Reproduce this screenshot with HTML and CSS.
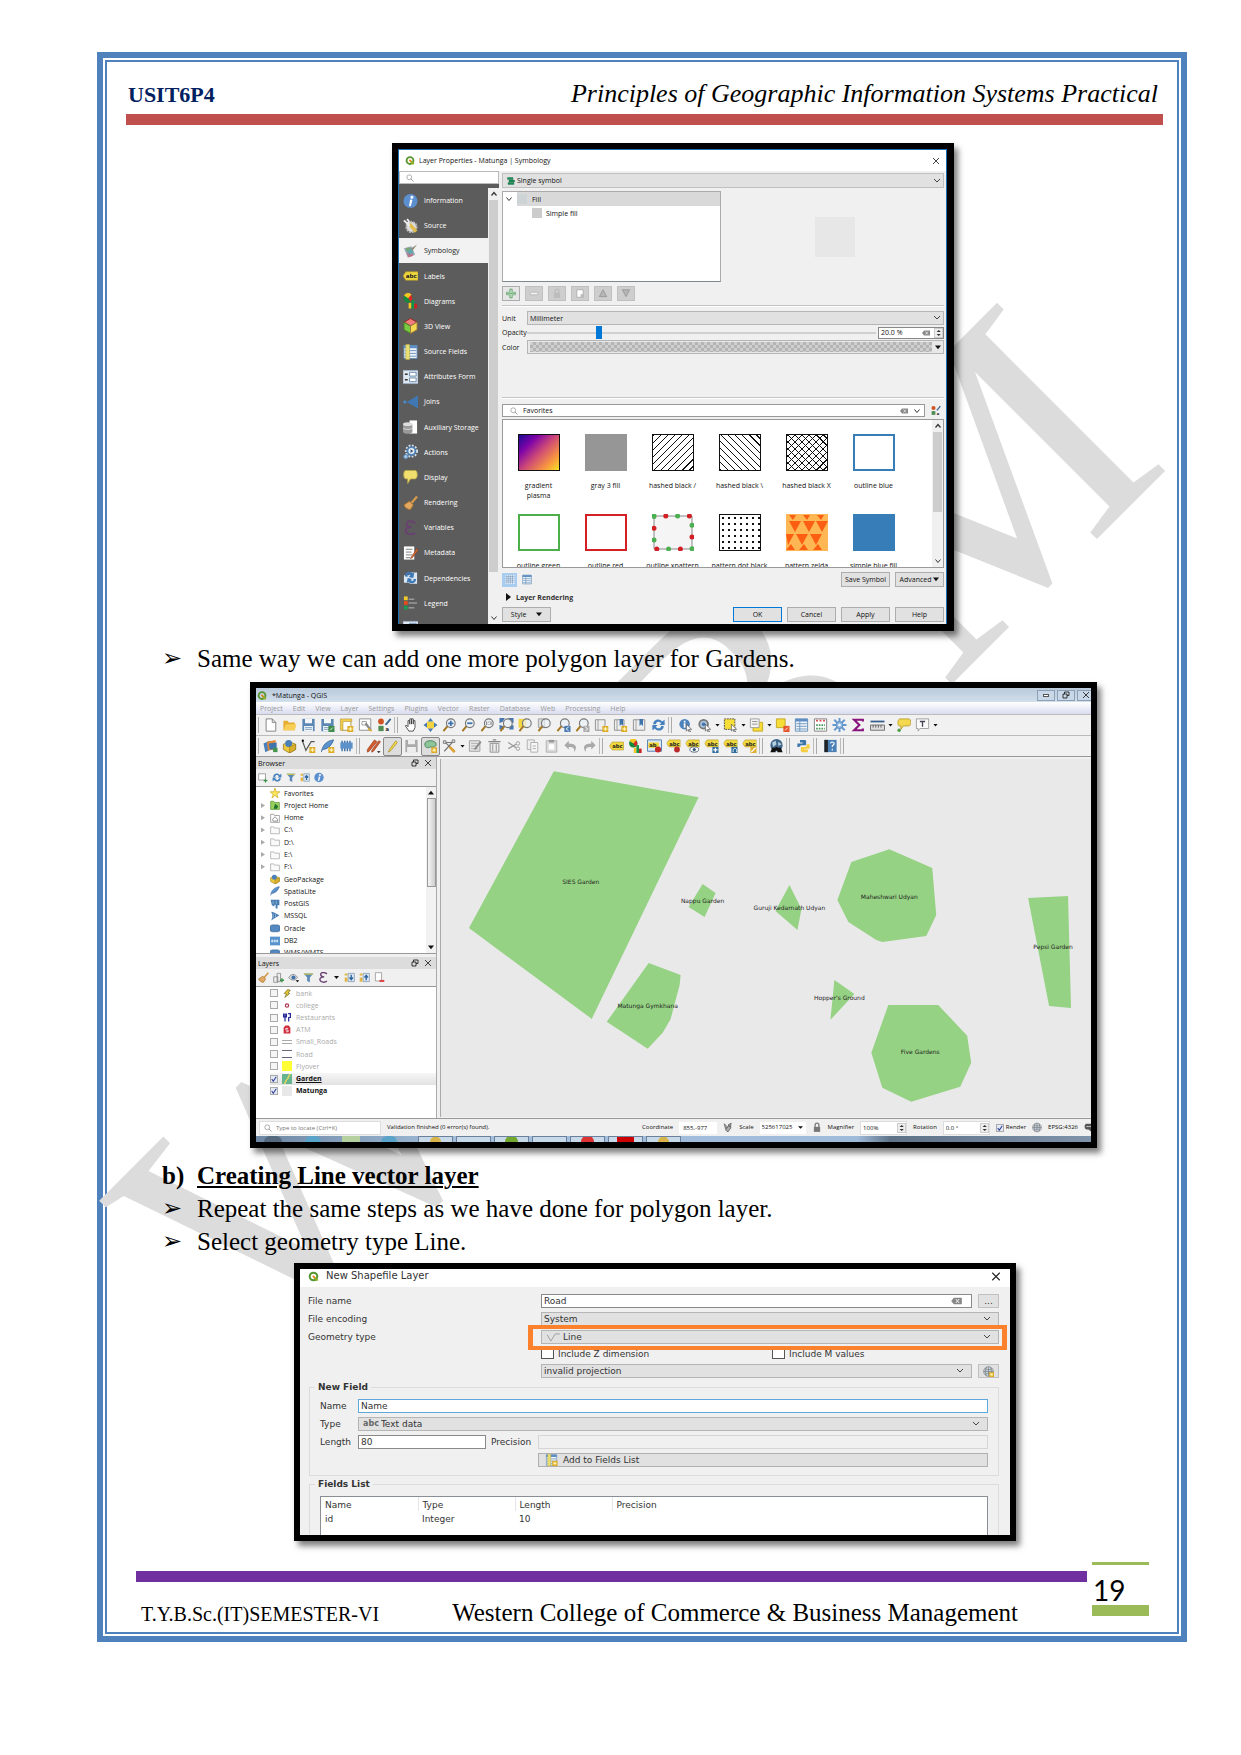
FILE: index.html
```html
<!DOCTYPE html>
<html lang="en">
<head>
<meta charset="utf-8">
<meta name="viewport" content="width=device-width, initial-scale=1">
<title>Principles of Geographic Information Systems Practical</title>
<link rel="stylesheet" href="styles.css">
</head>
<body>
<svg class="defs" aria-hidden="true">
<defs>
<symbol id="qgis" viewBox="0 0 16 16"><circle cx="8" cy="8" r="5.500" fill="none" stroke="#589632" stroke-width="3"/><path d="M9 9l5 5" stroke="#93b023" stroke-width="3"/><path d="M7 7l3 3" stroke="#ee7913" stroke-width="2.500"/></symbol>
<symbol id="search" viewBox="0 0 16 16"><circle cx="6.500" cy="6.500" r="4.800" fill="none" stroke="#888" stroke-width="1.300"/><path d="M10 10l5 5" stroke="#888" stroke-width="1.600"/></symbol>
<symbol id="close" viewBox="0 0 16 16"><path d="M2 2l12 12M14 2L2 14" stroke="#222" stroke-width="1.700" fill="none"/></symbol>
<symbol id="clear" viewBox="0 0 16 12"><path d="M0 6l4-5h12v10H4z" fill="#888"/><path d="M7 3l5 6M12 3L7 9" stroke="#fff" stroke-width="1.300"/></symbol>
<symbol id="float" viewBox="0 0 16 16"><path d="M5 6V2h9v7h-4M2 6h8v8H2z" fill="none" stroke="#222" stroke-width="1.800"/></symbol>
<symbol id="up" viewBox="0 0 16 16"><path d="M3 11l5-6 5 6" fill="none" stroke="#333" stroke-width="2.400"/></symbol>
<symbol id="down" viewBox="0 0 16 16"><path d="M3 5l5 6 5-6" fill="none" stroke="#333" stroke-width="2"/></symbol>
<symbol id="tri" viewBox="0 0 8 8"><path d="M0 2h8L4 7z" fill="#111"/></symbol>
<symbol id="info" viewBox="0 0 16 16"><circle cx="8" cy="8" r="7.500" fill="#5b8fd0"/><path d="M7.500 7h2l-1.500 6H6.500M8.500 3h2v2h-2z" stroke="#fff" fill="#fff"/></symbol>
<symbol id="source" viewBox="0 0 16 16"><circle cx="9" cy="9" r="5.500" fill="#ddd" stroke="#b8b8b8" stroke-width="2" stroke-dasharray="2 1"/><path d="M7 6l7 8" stroke="#e0bd4a" stroke-width="3.500"/><path d="M1 2l3 3 3 3M4 1c3 1 3 4 0 4" fill="none" stroke="#eee" stroke-width="2"/></symbol>
<symbol id="symbology" viewBox="0 0 16 16"><path d="M1 5l8-2 4 9-8 3z" fill="#9ab"/><path d="M3 5l4-1 2 4-5 1z" fill="#79a870"/><path d="M4 10l5-1 2 4-5 2z" fill="#c0738c"/><path d="M15 1L9 9l-3-2z" fill="#8b8772"/><path d="M4 8l5-3 2 5-4 2z" fill="#64a7aa"/></symbol>
<symbol id="abc" viewBox="0 0 16 16"><path d="M0 8l3-4.500h13v9H3z" fill="#f0d93e" stroke="#b3962a" stroke-width=".7"/><text x="3" y="10.500" class="glyph">abc</text></symbol>
<symbol id="diagram" viewBox="0 0 16 16"><circle cx="5.500" cy="5" r="4.800" fill="#138a3c"/><path d="M5.500 5V0A5 5 0 0 1 8 9z" fill="#d62828"/><path d="M5.500 5L1 2a5 5 0 0 1 8-1z" fill="#f3c623"/><path d="M6 10h3v6H6z" fill="#f3c623"/><path d="M9 7h3v9H9z" fill="#149447"/><path d="M12 11h3v5h-3z" fill="#c22"/></symbol>
<symbol id="cube" viewBox="0 0 16 16"><path d="M8 0l7 4-7 4-7-4z" fill="#f27d7d" stroke="#922"/><path d="M1 4l7 4v8l-7-4z" fill="#7ac943" stroke="#472"/><path d="M15 4L8 8v8l7-4z" fill="#f5d94e" stroke="#974"/></symbol>
<symbol id="table" viewBox="0 0 16 16"><path d="M1 1h14v14H1z" fill="#eef4fa" stroke="#5d87b0"/><path d="M1 1h14v3H1z" fill="#5d8fc4"/><path d="M2 6.500h12M2 9.500h12M2 12.500h12M6 4v11" stroke="#6c93bb"/></symbol>
<symbol id="fields" viewBox="0 0 16 16"><use href="#table"/><path d="M3 0h4v16H3z" fill="#eadf72" stroke="#b7a94a" stroke-width=".6"/></symbol>
<symbol id="form" viewBox="0 0 16 16"><path d="M0 1h16v14H0z" fill="#dfe7f1" stroke="#9fb0c4"/><path d="M2 5h3M2 11h3" stroke="#333" stroke-width="1.600"/><path d="M7 3h7v4H7zM7 9h7v4H7z" fill="#fff" stroke="#6889ad"/></symbol>
<symbol id="join" viewBox="0 0 16 16"><circle cx="2" cy="8" r="1.800" fill="#4b86be"/><path d="M4 8l12-7v14z" fill="#3f78b3"/></symbol>
<symbol id="storage" viewBox="0 0 16 16"><path d="M7 1h8v14H7z" fill="#fff"/><path d="M0 5v8c0 3 10 3 10 0V5z" fill="#999"/><ellipse cx="5" cy="5" rx="5" ry="2" fill="#ddd"/><path d="M0 9c1 2 9 2 10 0" stroke="#ddd" fill="none"/></symbol>
<symbol id="actions" viewBox="0 0 16 16"><circle cx="9" cy="7" r="6" fill="none" stroke="#cfe0f0" stroke-width="2" stroke-dasharray="2 1.500"/><circle cx="9" cy="7" r="5" fill="#4f82b8"/><circle cx="9" cy="7" r="3.200" fill="#e8f0f8"/><path d="M8 5l3 2-3 2z" fill="#356"/><circle cx="3" cy="13" r="2.300" fill="#a5c6e5" stroke="#4f82b8"/></symbol>
<symbol id="bubble" viewBox="0 0 16 16"><path d="M3 1h10c3 0 3 9 0 9H8l-3 5v-5H3C0 10 0 1 3 1z" fill="#f0df6e" stroke="#b7a545" stroke-width=".8"/></symbol>
<symbol id="brush" viewBox="0 0 16 16"><path d="M15 1L9 8" stroke="#d19a4c" stroke-width="2.500"/><path d="M7 6l4 4-3 5c-3 0-6-2-7-5z" fill="#e0a862" stroke="#a86f28"/></symbol>
<symbol id="eps" viewBox="0 0 16 16"><path d="M13 3C9-1 3 1 4 4c0 2 2 3 5 3-4 0-7 2-6 5s7 4 10 1" fill="none" stroke="#6a4172" stroke-width="2"/></symbol>
<symbol id="meta" viewBox="0 0 16 16"><path d="M1 1h11v14H1z" fill="#fff"/><path d="M3 4h7M3 7h6M3 10h7M3 13h5" stroke="#777"/><path d="M15 3l-6 9-1 2 2-1 6-8z" fill="#e26c33" stroke="#8a3d1a" stroke-width=".6"/></symbol>
<symbol id="depend" viewBox="0 0 16 16"><path d="M1 5h8v8H1zM7 2h8v12H7z" fill="#dbe7f2"/><path d="M2 6c0-5 6-6 8-3l2-1-1 6-5-1 2-2C6 3 4 4 5 7zM14 9c0 5-6 6-8 3l-2 1 1-5 5 1-2 1c2 2 4 1 3-1z" fill="#3e77b6"/></symbol>
<symbol id="legend" viewBox="0 0 16 16"><path d="M1 1h4v4H1z" fill="#f2cb2b"/><path d="M1 6h4v4H1z" fill="#e54b1b"/><path d="M1 11h4v4H1z" fill="#1d9b52"/><path d="M6 4h6M6 8h9M6 13h6" stroke="#999" stroke-width="1.500"/></symbol>
<symbol id="single" viewBox="0 0 16 16"><path d="M1 1h11v4H1zM4 6h11v4H4zM2 11h12v4H2z" fill="#178a55" stroke="#0c5f38" stroke-width=".6"/></symbol>
<symbol id="hues" viewBox="0 0 16 16"><circle cx="4" cy="4" r="3.300" fill="#cf5423"/><path d="M1 9h6v6H1z" fill="#4f8d55"/><path d="M10 7l5-6M9 7h2" stroke="#36648f" stroke-width="2"/><text x="9" y="15" class="glyph">a</text></symbol>
<symbol id="plus" viewBox="0 0 16 16"><path d="M6 1h4v5h5v4h-5v5H6v-5H1V6h5z" fill="#f2fff2" stroke="#3d8f4c"/><path d="M8 1v14M1 8h14" stroke="#3d8f4c"/></symbol>
<symbol id="minus" viewBox="0 0 16 16"><path d="M2 6h12v4H2z" fill="#f5f5f5" stroke="#aaa"/></symbol>
<symbol id="lock" viewBox="0 0 16 16"><path d="M5 7V4c0-4 6-4 6 0v3" stroke="#777" stroke-width="2" fill="none"/><path d="M3 7h10v8H3z" fill="#777"/></symbol>
<symbol id="dup" viewBox="0 0 16 16"><path d="M3 2h10v12H3z" fill="#fff" stroke="#999"/><path d="M9 9h5v5H9z" fill="#bbb"/></symbol>
<symbol id="tup" viewBox="0 0 16 16"><path d="M8 2l6 11H2z" fill="#b5b5b5" stroke="#888"/></symbol>
<symbol id="tdown" viewBox="0 0 16 16"><path d="M8 13L2 2h12z" fill="#b5b5b5" stroke="#888"/></symbol>
<symbol id="grid" viewBox="0 0 16 16"><path d="M1 1h14v14H1z" fill="#fff"/><path d="M1 3h14M1 6h14M1 9h14M1 12h14M3 1v14M6 1v14M9 1v14M12 1v14" stroke="#6d93bd"/></symbol>
<symbol id="page" viewBox="0 0 16 16"><path d="M3 1h7l4 4v10H3z" fill="#fff" stroke="#777"/><path d="M10 1v4h4" fill="none" stroke="#777"/></symbol>
<symbol id="folder" viewBox="0 0 16 16"><path d="M1 3h5l1 2h7v9H1z" fill="#e5ad32"/><path d="M1 14L4 7h12l-2 7z" fill="#f7cf58"/></symbol>
<symbol id="save" viewBox="0 0 16 16"><path d="M1 1h14v14H1z" fill="#5a87b4"/><path d="M4 1h8v5H4zM3 9h10v6H3z" fill="#f4f7fa"/><path d="M4 11h8M4 13h8" stroke="#7597b9"/></symbol>
<symbol id="savegray" viewBox="0 0 16 16"><path d="M1 1h14v14H1z" fill="#aaa"/><path d="M4 1h8v5H4zM3 9h10v6H3z" fill="#eee"/></symbol>
<symbol id="star" viewBox="0 0 16 16"><path d="M9 9h7v7H9z" fill="#dca91f"/><path d="M12.500 10v5M10 12.500h5M11 11l3 3M14 11l-3 3" stroke="#fff7bd"/></symbol>
<symbol id="saveas" viewBox="0 0 16 16"><use href="#save"/><path d="M9 9h7v7H9z" fill="#3f8b4b"/><path d="M11 14l3-3" stroke="#fff"/></symbol>
<symbol id="layout" viewBox="0 0 16 16"><path d="M3 2h10v12H3z" fill="#fff" stroke="#a88d34"/><path d="M1 1h13v3H4v10H1z" fill="#f0ce4b" stroke="#a88d34" stroke-width=".6"/><use href="#star"/></symbol>
<symbol id="manager" viewBox="0 0 16 16"><path d="M1 1h13v13H1z" fill="#fff" stroke="#888"/><path d="M4 4h5v4H4z" fill="none" stroke="#999"/><path d="M8 6l6 8" stroke="#888" stroke-width="2.500"/><path d="M11 12l4 3" stroke="#dcb13b" stroke-width="2"/></symbol>
<symbol id="hand" viewBox="0 0 16 16"><path d="M5 15L1 9l1-1 2 2V3h2v4-6h2v6-6h2v6-4h2v8l-2 4z" fill="#fff" stroke="#444"/></symbol>
<symbol id="pan" viewBox="0 0 16 16"><path d="M4 4h8v8H4z" fill="#f1d440"/><path d="M8 0l3 4H5zM8 16l3-4H5zM0 8l4-3v6zM16 8l-4-3v6z" fill="#4778ae"/></symbol>
<symbol id="lens" viewBox="0 0 16 16"><path d="M6 9l-5 6" stroke="#a5761e" stroke-width="2.200"/><circle cx="9.500" cy="6" r="5" fill="#eaf1f8" fill-opacity=".7" stroke="#777" stroke-width="1.300"/></symbol>
<symbol id="zin" viewBox="0 0 16 16"><use href="#lens"/><path d="M9.500 3v6M6.500 6h6" stroke="#3f73ad" stroke-width="2"/></symbol>
<symbol id="zout" viewBox="0 0 16 16"><use href="#lens"/><path d="M6.500 6h6" stroke="#3f73ad" stroke-width="2"/></symbol>
<symbol id="zone" viewBox="0 0 16 16"><use href="#lens"/><path d="M7 4v4M12 4v4M9.500 4v1M9.500 7v1" stroke="#888" stroke-width="1.300"/></symbol>
<symbol id="zfull" viewBox="0 0 16 16"><path d="M0 0h6L4 4 0 6zM16 0h-6l2 4 4 2zM0 13h5L4 9 0 8zM16 13h-5l1-4 4-1z" fill="#4676ad"/><use href="#lens"/></symbol>
<symbol id="zsel" viewBox="0 0 16 16"><path d="M0 1h9v10H0z" fill="#f3d742"/><use href="#lens"/></symbol>
<symbol id="zlayer" viewBox="0 0 16 16"><path d="M1 1h7v10H1z" fill="#ddd" stroke="#999"/><use href="#lens"/></symbol>
<symbol id="zlast" viewBox="0 0 16 16"><use href="#lens"/><path d="M9 9h7v7H9z" fill="#4a7bb1"/><path d="M14 10l-3 2.500 3 2.500" stroke="#fff" fill="none"/></symbol>
<symbol id="znext" viewBox="0 0 16 16"><use href="#lens"/><path d="M9 9h7v7H9z" fill="#aaa"/><path d="M11 10l3 2.500-3 2.500" stroke="#fff" fill="none"/></symbol>
<symbol id="newmap" viewBox="0 0 16 16"><path d="M1 2h11v12H1z" fill="#eee" stroke="#888"/><path d="M4 2v12" stroke="#999"/><use href="#star"/></symbol>
<symbol id="newmark" viewBox="0 0 16 16"><use href="#newmap"/><path d="M7 1h4v8L9 7 7 9z" fill="#3f74ac"/></symbol>
<symbol id="mark" viewBox="0 0 16 16"><path d="M1 2h13v12H1z" fill="#eee" stroke="#888"/><path d="M4 2v12" stroke="#999"/><path d="M8 1h4v8l-2-2-2 2z" fill="#3f74ac"/></symbol>
<symbol id="refresh" viewBox="0 0 16 16"><path d="M2 7c0-6 8-7 10-3l3-2v6H9l2-2C9 3 5 4 5 7zM14 9c0 6-8 7-10 3l-3 2V8h6l-2 2c2 3 6 2 6-1z" fill="#4680bd"/></symbol>
<symbol id="cursor" viewBox="0 0 16 16"><path d="M9 7l6 6-3 0 2 3-2 0-1-3-2 2z" fill="#fff" stroke="#555" stroke-width=".8"/></symbol>
<symbol id="identify" viewBox="0 0 16 16"><circle cx="7" cy="7" r="6" fill="#4d82bc"/><path d="M7 6v5M7 3v2" stroke="#fff" stroke-width="2"/><use href="#cursor"/></symbol>
<symbol id="gearcur" viewBox="0 0 16 16"><circle cx="7" cy="7" r="5" fill="#a8c3dd" stroke="#777" stroke-width="2"/><circle cx="7" cy="7" r="2" fill="#3f74ac"/><use href="#cursor"/></symbol>
<symbol id="select" viewBox="0 0 16 16"><path d="M1 1h12v12H1z" fill="#f7dd38" stroke="#444" stroke-dasharray="2 1"/><use href="#cursor"/></symbol>
<symbol id="selval" viewBox="0 0 16 16"><path d="M4 5h11v10H4z" fill="#f7dd38" stroke="#c1a420"/><path d="M1 1h10v10H1z" fill="#f3f3f3" stroke="#999"/><path d="M3 4h6M3 7h6" stroke="#888"/></symbol>
<symbol id="desel" viewBox="0 0 16 16"><path d="M1 1h10v10H1z" fill="#f7dd38" stroke="#c1a420"/><path d="M9 9h7v7H9z" fill="#e6552b"/><path d="M11 14l3-3" stroke="#fff"/></symbol>
<symbol id="abacus" viewBox="0 0 16 16"><path d="M1 1h14v14H1z" fill="#fff" stroke="#777"/><path d="M3 3h10" stroke="#cc3d3d" stroke-width="2" stroke-dasharray="2 2"/><path d="M3 8h10M3 12h10" stroke="#559c62" stroke-width="2" stroke-dasharray="2 1"/></symbol>
<symbol id="cog" viewBox="0 0 16 16"><path d="M8 0v16M0 8h16M2 2l12 12M14 2L2 14" stroke="#6498ce" stroke-width="2.200"/><circle cx="8" cy="8" r="4" fill="#8db8e3" stroke="#5488c0"/><circle cx="8" cy="8" r="1.500" fill="#fff"/></symbol>
<symbol id="sigma" viewBox="0 0 16 16"><path d="M13 4V2H3l6 6-6 6h10v-2" fill="none" stroke="#8a127e" stroke-width="2.400"/></symbol>
<symbol id="ruler" viewBox="0 0 16 16"><path d="M0 4h16" stroke="#335b8c" stroke-width="2"/><path d="M0 8h16v6H0z" fill="#ddd" stroke="#666"/><path d="M3 8v3M6 8v3M9 8v3M12 8v3" stroke="#555"/></symbol>
<symbol id="tip" viewBox="0 0 16 16"><path d="M4 1h10c3 0 3 8 0 8H8l-3 4V9H3C1 9 1 1 4 1z" fill="#f4d94e" stroke="#b99e2f"/><circle cx="3" cy="14" r="2" fill="#559c4a"/></symbol>
<symbol id="note" viewBox="0 0 16 16"><path d="M1 1h14v11H5l-2 3v-3H1z" fill="#fafafa" stroke="#999"/><path d="M5 4h6M8 4v6" stroke="#445" stroke-width="1.500"/></symbol>
<symbol id="layers" viewBox="0 0 16 16"><path d="M0 5l7-3 3 9-8 4z" fill="#4780ba"/><path d="M4 3l10-2-1 11-8 1z" fill="#e2883b"/><path d="M6 5l9-1v8H7z" fill="#3f74ac"/><path d="M11 10h5v5h-5z" fill="#44944c"/></symbol>
<symbol id="geopkg" viewBox="0 0 16 16"><path d="M1 6l7-3 7 3v6l-7 4-7-4z" fill="#ecc83d" stroke="#8d701b" stroke-width=".8"/><circle cx="7" cy="5" r="4" fill="#4980b9"/><path d="M8 9v7l7-4V6z" fill="#d9b02c" stroke="#8d701b" stroke-width=".6"/></symbol>
<symbol id="shape" viewBox="0 0 16 16"><path d="M1 2l4 11 6-10h4" fill="none" stroke="#555" stroke-width="1.300"/><circle cx="1.500" cy="2" r="1.300"/><use href="#star"/></symbol>
<symbol id="feather" viewBox="0 0 16 16"><path d="M1 15C2 7 7 2 15 1c-2 5-5 10-12 11" fill="#5c92cc" stroke="#2e5c90" stroke-width=".8"/></symbol>
<symbol id="featherplus" viewBox="0 0 16 16"><use href="#feather"/><use href="#star"/></symbol>
<symbol id="chip" viewBox="0 0 16 16"><path d="M3 2v12M6 2v12M9 2v12M12 2v12" stroke="#3c6ea5" stroke-width="1.600"/><path d="M1 4h14v7H1z" fill="#5b90c8"/></symbol>
<symbol id="pencils" viewBox="0 0 16 16"><path d="M9 1L1 12v3l2-1L12 3zM14 2L6 13v2l2-1 8-11z" fill="#d65a2c" stroke="#8c3b1d" stroke-width=".7"/><path d="M12 14h4l-2 2z"/></symbol>
<symbol id="pencil" viewBox="0 0 16 16"><path d="M12 1L4 12l-1 3 3-2 8-10z" fill="#f3d846" stroke="#9c8627" stroke-width=".8"/></symbol>
<symbol id="blob" viewBox="0 0 16 16"><path d="M1 5c0-6 14-5 14 0 0 5-6 3-8 4S1 10 1 5z" fill="#8cc59a" stroke="#41734c"/><use href="#star"/></symbol>
<symbol id="vertex" viewBox="0 0 16 16"><path d="M2 14L12 3M2 3l11 10M1 4h10" stroke="#777" stroke-width="1.400"/><path d="M1 2h3v3H1zM11 1h3v3h-3z" fill="#ddd" stroke="#777"/><path d="M8 9l6 6" stroke="#dca033" stroke-width="3"/></symbol>
<symbol id="extent" viewBox="0 0 16 16"><path d="M2 2l5 5-3 3zM8 4l5-3-1 6zM4 12l4 3 5-7-4-3z" fill="#aaa" stroke="#444"/></symbol>
<symbol id="editgray" viewBox="0 0 16 16"><path d="M1 2h12v12H1z" fill="#e5e5e5" stroke="#999"/><path d="M3 5h8M3 8h8M3 11h8" stroke="#aaa"/><path d="M14 3l-7 9" stroke="#888" stroke-width="2"/></symbol>
<symbol id="trash" viewBox="0 0 16 16"><path d="M1 3h14M6 1h4" stroke="#888" stroke-width="1.600"/><path d="M3 5h10v10H3z" fill="#eee" stroke="#888"/><path d="M6 6v8M10 6v8" stroke="#888"/></symbol>
<symbol id="cut" viewBox="0 0 16 16"><path d="M2 4l9 6M2 11l9-5" stroke="#999" stroke-width="1.500"/><circle cx="13" cy="5" r="2" fill="none" stroke="#999"/><circle cx="13" cy="11" r="2" fill="none" stroke="#999"/></symbol>
<symbol id="copy" viewBox="0 0 16 16"><path d="M2 1h8v11H2z" fill="#eee" stroke="#aaa"/><path d="M6 4h8v11H6z" fill="#f6f6f6" stroke="#aaa"/><path d="M8 8h4M8 11h4" stroke="#aaa"/></symbol>
<symbol id="paste" viewBox="0 0 16 16"><path d="M2 2h12v13H2z" fill="#ddd" stroke="#aaa"/><path d="M5 1h6v3H5z" fill="#999"/><path d="M5 6h6v6H5z" fill="#fff"/></symbol>
<symbol id="undo" viewBox="0 0 16 16"><path d="M1 7l5-5v3c9 0 10 5 6 10 1-5-1-6-6-6v3z" fill="#a9a9a9"/></symbol>
<symbol id="redo" viewBox="0 0 16 16"><path d="M15 7l-5-5v3C1 5 0 10 4 15 3 10 5 9 10 9v3z" fill="#a9a9a9"/></symbol>
<symbol id="abox" viewBox="0 0 16 16"><path d="M0 1h16v13H0z" fill="#dbe7f4" stroke="#4a79aa"/><path d="M1 4h12v6H1z" fill="#f2d832"/><text x="2" y="9" class="glyph">ab</text><circle cx="12" cy="12" r="3.500" fill="#c62828"/></symbol>
<symbol id="tag" viewBox="0 0 16 16"><path d="M0 5l3-4h13v8H3z" fill="#f0d93e" stroke="#b3962a" stroke-width=".7"/><text x="3" y="7.500" class="glyph">abc</text></symbol>
<symbol id="tagred" viewBox="0 0 16 16"><use href="#tag"/><circle cx="12" cy="12" r="3.300" fill="#b92a2a"/></symbol>
<symbol id="tageye" viewBox="0 0 16 16"><use href="#tag"/><ellipse cx="10" cy="12" rx="5" ry="3" fill="#fff" stroke="#456"/><circle cx="10" cy="12" r="1.800" fill="#357"/></symbol>
<symbol id="tagmove" viewBox="0 0 16 16"><use href="#tag"/><path d="M9 9h7v7H9z" fill="#2e6b9b"/><path d="M10 12.500h5M12.500 10v5" stroke="#fff" stroke-width="1.500"/></symbol>
<symbol id="tagturn" viewBox="0 0 16 16"><use href="#tag"/><path d="M9 9h7v7H9z" fill="#2e6b9b"/><path d="M11 15v-2c0-3 4-3 4 0v2" stroke="#fff" fill="none"/></symbol>
<symbol id="tagedit" viewBox="0 0 16 16"><use href="#tag"/><path d="M9 9h7v7H9z" fill="#e0b030"/><path d="M10 15l5-5" stroke="#fff" stroke-width="1.500"/></symbol>
<symbol id="globe" viewBox="0 0 16 16"><circle cx="8" cy="8" r="7" fill="#c8d8e6" stroke="#777"/><path d="M8 1v14M1 8h14M3 4c3 2 7 2 10 0M3 12c3-2 7-2 10 0M5 2c-2 4-2 8 0 12M11 2c2 4 2 8 0 12" stroke="#777" fill="none"/></symbol>
<symbol id="metasearch" viewBox="0 0 16 16"><circle cx="8" cy="7" r="7" fill="#3f6589"/><path d="M3 4l4-2 1 4-4 3zM10 3l4 3-4 2z" fill="#b7d0df"/><path d="M3 10h4v-1h2v1h4l2 5H9v-2H7v2H1z" fill="#111"/></symbol>
<symbol id="python" viewBox="0 0 16 16"><path d="M4 1h6l1 1v5H5L3 9H1V5h6V4H4z" fill="#3b76ab"/><path d="M12 6h3v5H9v1h4v3H6l-1-1V9h6z" fill="#f5cf3f"/></symbol>
<symbol id="book" viewBox="0 0 16 16"><path d="M1 1h14v14H1z" fill="#4a80b5"/><path d="M1 1h4v14H1z" fill="#222"/><path d="M8 5c1-3 5-1 4 1l-2 2v1M10 11v2" stroke="#fff" fill="none" stroke-width="1.300"/></symbol>
<symbol id="addlayer" viewBox="0 0 16 16"><path d="M1 2h11v10H1z" fill="#fff" stroke="#777"/><path d="M9 13h6M12 10v6" stroke="#3a9446" stroke-width="2"/></symbol>
<symbol id="filter" viewBox="0 0 16 16"><path d="M1 2h14l-5 6v7l-4-2V8z" fill="#5b89b8"/><path d="M1 2h14l-1 2H2z" fill="#c2c24e"/></symbol>
<symbol id="collapse" viewBox="0 0 16 16"><path d="M1 2h4v3H1zM1 8h4v6H1z" fill="#e3b642"/><path d="M6 2h9v12H6z" fill="#dfe8f1" stroke="#718eac"/><path d="M10.500 12V5M8 8l2.500-3L13 8" stroke="#2f67a3" stroke-width="2" fill="none"/></symbol>
<symbol id="expand" viewBox="0 0 16 16"><path d="M1 2h4v3H1zM1 8h4v6H1z" fill="#e3b642"/><path d="M6 2h9v12H6z" fill="#dfe8f1" stroke="#718eac"/><path d="M10.500 4v7M8 8l2.500 3L13 8" stroke="#2f67a3" stroke-width="2" fill="none"/></symbol>
<symbol id="fav" viewBox="0 0 16 16"><path d="M8 0l2 6h6l-5 4 2 6-5-4-5 4 2-6-5-4h6z" fill="#fae65b" stroke="#c7a21f"/></symbol>
<symbol id="phome" viewBox="0 0 16 16"><path d="M1 2h5l1 2h8v11H1z" fill="#98cf5a" stroke="#4d8a34"/><path d="M8 6l5 4-2 4H6z" fill="#1b7130"/></symbol>
<symbol id="home" viewBox="0 0 16 16"><path d="M1 2h5l1 2h8v11H1z" fill="#fff" stroke="#777"/><path d="M4 10l4-4 4 4v3H5z" fill="none" stroke="#555"/></symbol>
<symbol id="dir" viewBox="0 0 16 16"><path d="M1 3h5l1 2h8v9H1z" fill="#fafafa" stroke="#999"/></symbol>
<symbol id="pg" viewBox="0 0 16 16"><path d="M1 1h14v9h-3v5H9V9H7v3L3 10z" fill="#467cb3"/><path d="M5 3v5M10 3v5" stroke="#bcd2e6"/></symbol>
<symbol id="ms" viewBox="0 0 16 16"><path d="M2 1c5 1 9 3 13 6-4 2-8 5-13 8 2-5 2-9 0-14z" fill="#467cb3"/><path d="M5 4v8M9 5v5" stroke="#bcd2e6"/></symbol>
<symbol id="ora" viewBox="0 0 16 16"><rect x="0" y="3" width="16" height="11" rx="4" fill="#5388c0" stroke="#2f5e90"/></symbol>
<symbol id="db2" viewBox="0 0 16 16"><path d="M0 1h16v14H0z" fill="#5793cd"/><path d="M2 8h12" stroke="#cfe1f2" stroke-width="4" stroke-dasharray="3 1"/></symbol>
<symbol id="eye" viewBox="0 0 16 16"><path d="M1 8c4-6 9-6 13 0-4 5-9 5-13 0z" fill="#ddd" stroke="#777"/><circle cx="8" cy="8" r="3" fill="#3f74ac"/><path d="M11 12h5l-2 3z"/></symbol>
<symbol id="addgroup" viewBox="0 0 16 16"><path d="M1 7h6v8H1zM6 2h5v12H6z" fill="#eee" stroke="#777"/><path d="M10 12h6M13 9v6" stroke="#3a9446" stroke-width="2"/></symbol>
<symbol id="remove" viewBox="0 0 16 16"><path d="M2 1h9v12H2z" fill="#fff" stroke="#888"/><path d="M8 13h7" stroke="#d44" stroke-width="3"/></symbol>
<symbol id="bank" viewBox="0 0 16 16"><path d="M9 1l5 1-4 5 3 1-9 7 3-6-4-1z" fill="#e2c42f" stroke="#59501a"/></symbol>
<symbol id="college" viewBox="0 0 16 16"><circle cx="8" cy="8" r="3" fill="#eee" stroke="#b33a55" stroke-width="2"/></symbol>
<symbol id="rest" viewBox="0 0 16 16"><path d="M2 1v6h5V1M4.500 1v14M10 1h4v7h-3v7" fill="none" stroke="#25269b" stroke-width="2.200"/></symbol>
<symbol id="atm" viewBox="0 0 16 16"><path d="M5 1h6l3 4v10H2V5z" fill="#d02c3d"/><path d="M10 6H6v3h4v3H6" fill="none" stroke="#fff" stroke-width="1.400"/></symbol>
<symbol id="chat" viewBox="0 0 16 16"><path d="M4 2h9c4 0 4 9 0 9h-2l1 4-5-4H4C0 11 0 2 4 2z" fill="#555"/><path d="M4 6.500h8" stroke="#fff" stroke-width="1.500" stroke-dasharray="2 1"/></symbol>
</defs>
</svg>

<div class="page">
<svg class="watermark" viewBox="0 0 1090 1200" aria-hidden="true"><text transform="translate(170 1111) rotate(-45)" x="0 382 666 958" y="0">WCBM</text></svg>

<header class="head"><strong>USIT6P4</strong><em>Principles of Geographic Information Systems Practical</em></header>

<main>
<figure class="shot props">
 <div class="props-title"><svg class="i10"><use href="#qgis"/></svg><span>Layer Properties - Matunga | Symbology</span><button class="bare" aria-label="Close"><svg class="i8"><use href="#close"/></svg></button></div>
 <div class="props-body">
  <div class="side">
   <label class="side-search"><svg class="i8"><use href="#search"/></svg><input type="text" aria-label="Search sections"></label>
   <div class="side-main">
    <ul class="side-list">
     <li><svg class="i15"><use href="#info"/></svg>Information</li>
     <li><svg class="i15"><use href="#source"/></svg>Source</li>
     <li class="on"><svg class="i15"><use href="#symbology"/></svg>Symbology</li>
     <li><svg class="i15"><use href="#abc"/></svg>Labels</li>
     <li><svg class="i15"><use href="#diagram"/></svg>Diagrams</li>
     <li><svg class="i15"><use href="#cube"/></svg>3D View</li>
     <li><svg class="i15"><use href="#fields"/></svg>Source Fields</li>
     <li><svg class="i15"><use href="#form"/></svg>Attributes Form</li>
     <li><svg class="i15"><use href="#join"/></svg>Joins</li>
     <li><svg class="i15"><use href="#storage"/></svg>Auxiliary Storage</li>
     <li><svg class="i15"><use href="#actions"/></svg>Actions</li>
     <li><svg class="i15"><use href="#bubble"/></svg>Display</li>
     <li><svg class="i15"><use href="#brush"/></svg>Rendering</li>
     <li><svg class="i15"><use href="#eps"/></svg>Variables</li>
     <li><svg class="i15"><use href="#meta"/></svg>Metadata</li>
     <li><svg class="i15"><use href="#depend"/></svg>Dependencies</li>
     <li><svg class="i15"><use href="#legend"/></svg>Legend</li>
     <li><svg class="i15"><use href="#form"/></svg></li>
    </ul>
    <div class="vbar"><svg class="i8"><use href="#up"/></svg><i class="thumb tall"></i><svg class="i8"><use href="#down"/></svg></div>
   </div>
  </div>
  <div class="pane">
   <div class="combo"><svg class="i8"><use href="#single"/></svg><select aria-label="Renderer"><option>Single symbol</option></select></div>
   <div class="tree-row">
    <ul class="tree">
     <li><svg class="i8"><use href="#down"/></svg><span class="picked"><i class="chip c1"></i>Fill</span></li>
     <li class="child"><i class="chip c2"></i>Simple fill</li>
    </ul>
    <div class="preview"><i></i></div>
   </div>
   <div class="mini-buttons">
    <button aria-label="Add"><svg class="i10"><use href="#plus"/></svg></button><button class="off" aria-label="Remove"><svg class="i10"><use href="#minus"/></svg></button><button class="off" aria-label="Lock"><svg class="i10 faint"><use href="#lock"/></svg></button><button class="off" aria-label="Duplicate"><svg class="i10"><use href="#dup"/></svg></button><button class="off" aria-label="Move up"><svg class="i10"><use href="#tup"/></svg></button><button class="off" aria-label="Move down"><svg class="i10"><use href="#tdown"/></svg></button>
   </div>
   <hr>
   <div class="prop-grid">
    <label for="unit">Unit</label><select id="unit"><option>Millimeter</option></select>
    <label for="opacity">Opacity</label><div class="opacity"><input id="opacity" type="range" min="0" max="100" value="20"><span class="spin"><input type="text" value="20.0 %" aria-label="Opacity value"><svg class="i8"><use href="#clear"/></svg><i class="updown"></i></span></div>
    <label for="color">Color</label><button id="color" class="color" aria-label="Color"><span></span><svg class="i6"><use href="#tri"/></svg></button>
   </div>
   <hr class="second">
   <div class="fav-row"><label class="fav"><svg class="i8"><use href="#search"/></svg><input type="text" value="Favorites" aria-label="Symbol filter"><svg class="i8"><use href="#clear"/></svg><svg class="i8"><use href="#down"/></svg></label><svg class="i10"><use href="#hues"/></svg></div>
   <div class="symbols">
    <ul>
     <li><i class="sw plasma"></i>gradient<br>plasma</li>
     <li><i class="sw gray"></i>gray 3 fill</li>
     <li><i class="sw hash"></i>hashed black /</li>
     <li><i class="sw hash back"></i>hashed black \</li>
     <li><i class="sw hash cross"></i>hashed black X</li>
     <li><i class="sw oblue"></i>outline blue</li>
     <li><i class="sw ogreen"></i>outline green</li>
     <li><i class="sw ored"></i>outline red</li>
     <li><svg class="sw-svg" viewBox="0 0 42 37"><path d="M2 2h38v33H2z" fill="#f5f5f5" stroke="#888"/><path d="M2 2h38v33H2z" fill="none" stroke="#4caf50" stroke-width="5" stroke-linecap="round" stroke-dasharray="0 23.600"/><path d="M2 2h38v33H2z" fill="none" stroke="#d32027" stroke-width="5" stroke-linecap="round" stroke-dasharray="0 23.600" stroke-dashoffset="11.800"/></svg>outline xpattern</li>
     <li><i class="sw dots"></i>pattern dot black</li>
     <li><svg class="sw-svg" viewBox="0 0 42 37"><path d="M0 0h42v37H0z" fill="#feb752"/><path d="M3 1h7l-3 5zM17 1h7l-3 5zM31 1h7l-3 5zM3 7h12l-6 11zM17 7h12l-6 11zM30 7h12l-6 11zM0 20h8l-6 11zM10 20h12l-6 11zM24 20h12l-6 11zM0 36h9l-4-6zM13 36h9l-4-6zM27 36h9l-4-6z" fill="#fc5f12"/></svg>pattern zelda</li>
     <li><i class="sw bfill"></i>simple blue fill</li>
    </ul>
    <div class="vbar light"><svg class="i8"><use href="#up"/></svg><i class="thumb"></i><svg class="i8"><use href="#down"/></svg></div>
   </div>
   <div class="view-row"><button class="bare view on" aria-label="Icon view"><svg class="i10"><use href="#grid"/></svg></button><button class="bare view" aria-label="List view"><svg class="i10"><use href="#table"/></svg></button><span class="grow"></span><button class="btn">Save Symbol</button><button class="btn">Advanced <svg class="i6"><use href="#tri"/></svg></button></div>
   <div class="render-row"><i class="play"></i>Layer Rendering</div>
   <div class="ok-row"><button class="btn">Style <svg class="i6 far"><use href="#tri"/></svg></button><span class="grow"></span><button class="btn ok">OK</button><button class="btn">Cancel</button><button class="btn">Apply</button><button class="btn">Help</button></div>
  </div>
 </div>
</figure>

<p class="item"><span class="mark">➢</span>Same way we can add one more polygon layer for Gardens.</p>

<figure class="shot qgis">
 <div class="q-title"><svg class="i10"><use href="#qgis"/></svg><span>*Matunga - QGIS</span><span class="grow"></span><button aria-label="Minimize"><i class="min"></i></button><button aria-label="Restore"><svg class="i8"><use href="#float"/></svg></button><button aria-label="Close"><svg class="i8"><use href="#close"/></svg></button></div>
 <nav class="q-menu"><span>Project</span><span>Edit</span><span>View</span><span>Layer</span><span>Settings</span><span>Plugins</span><span>Vector</span><span>Raster</span><span>Database</span><span>Web</span><span>Processing</span><span>Help</span></nav>
 <div class="bar"><i class="grip first"></i><svg><use href="#page"/></svg><svg><use href="#folder"/></svg><svg><use href="#save"/></svg><svg><use href="#saveas"/></svg><svg><use href="#layout"/></svg><svg><use href="#manager"/></svg><svg><use href="#hues"/></svg><i class="grip"></i><svg><use href="#hand"/></svg><svg><use href="#pan"/></svg><svg><use href="#zin"/></svg><svg><use href="#zout"/></svg><svg><use href="#zone"/></svg><svg><use href="#zfull"/></svg><svg><use href="#zsel"/></svg><svg><use href="#zlayer"/></svg><svg><use href="#zlast"/></svg><svg><use href="#znext"/></svg><svg><use href="#newmap"/></svg><svg><use href="#newmark"/></svg><svg><use href="#mark"/></svg><svg><use href="#refresh"/></svg><i class="grip"></i><svg><use href="#identify"/></svg><svg><use href="#gearcur"/></svg><i class="more"></i><svg><use href="#select"/></svg><i class="more"></i><svg><use href="#selval"/></svg><i class="more"></i><svg><use href="#desel"/></svg><svg><use href="#table"/></svg><svg><use href="#abacus"/></svg><svg><use href="#cog"/></svg><svg><use href="#sigma"/></svg><svg><use href="#ruler"/></svg><i class="more"></i><svg><use href="#tip"/></svg><svg><use href="#note"/></svg><i class="more"></i></div>
 <div class="bar"><i class="grip first"></i><svg><use href="#layers"/></svg><svg><use href="#geopkg"/></svg><svg><use href="#shape"/></svg><svg><use href="#featherplus"/></svg><svg><use href="#chip"/></svg><i class="grip"></i><svg><use href="#pencils"/></svg><svg class="down"><use href="#pencil"/></svg><svg><use href="#savegray"/></svg><svg class="down"><use href="#blob"/></svg><svg><use href="#vertex"/></svg><i class="more"></i><svg><use href="#editgray"/></svg><svg><use href="#trash"/></svg><svg><use href="#cut"/></svg><svg><use href="#copy"/></svg><svg><use href="#paste"/></svg><svg><use href="#undo"/></svg><svg><use href="#redo"/></svg><i class="grip"></i><svg><use href="#abc"/></svg><svg><use href="#diagram"/></svg><svg><use href="#abox"/></svg><svg><use href="#tagred"/></svg><svg><use href="#tageye"/></svg><svg><use href="#tagmove"/></svg><svg><use href="#tagturn"/></svg><svg><use href="#tagedit"/></svg><i class="grip"></i><svg><use href="#metasearch"/></svg><i class="grip"></i><svg><use href="#python"/></svg><i class="grip"></i><svg><use href="#book"/></svg><i class="grip"></i></div>
 <div class="q-body">
  <div class="docks">
   <section>
    <h4>Browser<span class="grow"></span><svg class="i8"><use href="#float"/></svg><svg class="i8"><use href="#close"/></svg></h4>
    <div class="dock-tools"><svg><use href="#addlayer"/></svg><svg><use href="#refresh"/></svg><svg><use href="#filter"/></svg><svg><use href="#collapse"/></svg><svg><use href="#info"/></svg></div>
    <div class="browser">
     <ul>
      <li><i></i><svg><use href="#fav"/></svg>Favorites</li>
      <li><i class="exp"></i><svg><use href="#phome"/></svg>Project Home</li>
      <li><i class="exp"></i><svg><use href="#home"/></svg>Home</li>
      <li><i class="exp"></i><svg><use href="#dir"/></svg>C:\</li>
      <li><i class="exp"></i><svg><use href="#dir"/></svg>D:\</li>
      <li><i class="exp"></i><svg><use href="#dir"/></svg>E:\</li>
      <li><i class="exp"></i><svg><use href="#dir"/></svg>F:\</li>
      <li><i></i><svg><use href="#geopkg"/></svg>GeoPackage</li>
      <li><i></i><svg><use href="#feather"/></svg>SpatiaLite</li>
      <li><i></i><svg><use href="#pg"/></svg>PostGIS</li>
      <li><i></i><svg><use href="#ms"/></svg>MSSQL</li>
      <li><i></i><svg><use href="#ora"/></svg>Oracle</li>
      <li><i></i><svg><use href="#db2"/></svg>DB2</li>
      <li><i></i><svg><use href="#ora"/></svg>WMS/WMTS</li>
     </ul>
     <div class="vbar q"><svg class="i6 flip"><use href="#tri"/></svg><i class="thumb"></i><svg class="i6"><use href="#tri"/></svg></div>
    </div>
   </section>
   <section class="layers">
    <h4>Layers<span class="grow"></span><svg class="i8"><use href="#float"/></svg><svg class="i8"><use href="#close"/></svg></h4>
    <div class="dock-tools wide"><svg><use href="#brush"/></svg><svg><use href="#addgroup"/></svg><svg><use href="#eye"/></svg><svg><use href="#filter"/></svg><svg><use href="#eps"/></svg><i class="more"></i><svg><use href="#expand"/></svg><svg><use href="#collapse"/></svg><svg><use href="#remove"/></svg></div>
    <ul class="layer-list">
     <li><label><input type="checkbox"><svg><use href="#bank"/></svg>bank</label></li>
     <li><label><input type="checkbox"><svg><use href="#college"/></svg>college</label></li>
     <li><label><input type="checkbox"><svg><use href="#rest"/></svg>Restaurants</label></li>
     <li><label><input type="checkbox"><svg><use href="#atm"/></svg>ATM</label></li>
     <li><label><input type="checkbox"><i class="lines small"></i>Small_Roads</label></li>
     <li><label><input type="checkbox"><i class="lines"></i>Road</label></li>
     <li><label><input type="checkbox"><i class="sq y"></i>Flyover</label></li>
     <li class="cur"><label><input type="checkbox" checked><i class="sq g"></i><u>Garden</u></label></li>
     <li class="live"><label><input type="checkbox" checked><i class="sq"></i>Matunga</label></li>
    </ul>
   </section>
  </div>
  <svg class="map" viewBox="440 759 651 358" role="img" aria-label="Map of gardens">
   <g fill="#95d283">
    <path d="M553 771L698 797 591 1019 468 928z"/>
    <path d="M648 963L680 975 679 985 670 1019 662 1033 647 1049 606 1022z"/>
    <path d="M702 884L715 893 704 917 688 907z"/>
    <path d="M789 885L801 909 797 930 775 911z"/>
    <path d="M889 849L932 868 936 915 926 936 882 942 876 940 848 922 837 900 851 862z"/>
    <path d="M1028 898L1068 896 1071 1008 1049 1006z"/>
    <path d="M834 980L854 994 830 1020z"/>
    <path d="M888 1005L938 1005 967 1036 971 1063 960 1087 911 1102 882 1088 871 1053z"/>
   </g>
   <g class="map-text">
    <text x="580" y="884">SIES Garden</text><text x="702" y="903">Nappu Garden</text><text x="789" y="910">Guruji Kedarnath Udyan</text><text x="889" y="899">Maheshwari Udyan</text><text x="1053" y="949">Pepsi Garden</text><text x="647" y="1008">Matunga Gymkhana</text><text x="839" y="1000">Hopper's Ground</text><text x="920" y="1054">Five Gardens</text>
   </g>
  </svg>
 </div>
 <div class="status">
  <label class="locate"><svg class="i8"><use href="#search"/></svg><input type="text" placeholder="Type to locate (Ctrl+K)" aria-label="Locate"></label>
  <span>Validation finished (0 error(s) found).</span><span class="grow"></span>
  <label for="coord">Coordinate</label><input id="coord" class="w40" type="text" value="855,-977"><svg class="i10"><use href="#extent"/></svg>
  <label for="scale">Scale</label><select id="scale" class="w46"><option>525617025</option></select><svg class="i10"><use href="#lock"/></svg>
  <label for="mag">Magnifier</label><span class="spin2"><input id="mag" type="text" value="100%"><i class="updown"></i></span>
  <label for="rot">Rotation</label><span class="spin2"><input id="rot" type="text" value="0.0 °"><i class="updown"></i></span>
  <label class="render"><input type="checkbox" checked>Render</label><svg class="i10"><use href="#globe"/></svg><span>EPSG:4326</span><svg class="i10"><use href="#chat"/></svg>
 </div>
 <div class="task"><i class="orb"></i><i class="ie"></i><i class="folder"></i><i class="ie"></i><i class="tile y"></i><i class="tile"></i><i class="tile g"></i><i class="tile"></i><i class="tile r"></i><i class="tile sq"></i><i class="tile y"></i></div>
</figure>

<h2 class="item"><span class="mark">b)</span><u>Creating Line vector layer</u></h2>
<p class="item"><span class="mark">➢</span>Repeat the same steps as we have done for polygon layer.</p>
<p class="item"><span class="mark">➢</span>Select geometry type Line.</p>

<figure class="shot shape">
 <div class="s-title"><svg class="i15"><use href="#qgis"/></svg><span>New Shapefile Layer</span><button class="bare" aria-label="Close"><svg class="i10"><use href="#close"/></svg></button></div>
 <form class="s-form">
  <div class="s-top">
   <label for="fname">File name</label><div class="pair"><span class="clearable"><input id="fname" type="text" value="Road"><svg class="i12"><use href="#clear"/></svg></span><button type="button" class="small-btn">...</button></div>
   <label for="enc">File encoding</label><select id="enc"><option>System</option></select>
   <label for="geom">Geometry type</label><div class="hot"><svg class="vee" viewBox="0 0 16 10"><path d="M1 2l4 7 5-8h5" fill="none" stroke="#999"/></svg><select id="geom"><option>Line</option></select></div>
   <div class="checks"><label><input type="checkbox">Include Z dimension</label><label><input type="checkbox">Include M values</label></div>
   <div class="pair proj"><select aria-label="Projection"><option>invalid projection</option></select><button type="button" class="small-btn" aria-label="Select projection"><svg class="i15"><use href="#globe"/><use href="#star"/></svg></button></div>
  </div>
  <fieldset><legend>New Field</legend>
   <div class="field-grid">
    <label for="n">Name</label><input id="n" class="span focus" type="text" value="Name">
    <label for="t">Type</label><div class="span typed"><b>abc</b><select id="t"><option>Text data</option></select></div>
    <label for="l">Length</label><input id="l" type="text" value="80"><label for="p" class="prec">Precision</label><input id="p" type="text" disabled>
    <button type="button" class="add"><svg class="i15"><use href="#fields"/><use href="#star"/></svg>Add to Fields List</button>
   </div>
  </fieldset>
  <fieldset><legend>Fields List</legend>
   <div class="table-box"><table><thead><tr><th>Name</th><th>Type</th><th>Length</th><th>Precision</th></tr></thead><tbody><tr><td>id</td><td>Integer</td><td>10</td><td></td></tr></tbody></table></div>
  </fieldset>
 </form>
</figure>
</main>

<footer class="foot">
 <div class="foot-main"><span>T.Y.B.Sc.(IT)SEMESTER-VI</span><span class="college">Western College of Commerce &amp; Business Management</span></div>
 <div class="foot-num">19</div>
</footer>
</div>
</body>
</html>
```
FILE: styles.css
```css
* { box-sizing: border-box; }
body { margin: 0; background: #fff; color: #000; font-family: "Liberation Serif", serif; }
.defs { position: absolute; width: 0; height: 0; }
ul { list-style: none; margin: 0; padding: 0; }
svg { flex: none; }
.grow { flex: 1; }
.glyph { font: bold 6px "DejaVu Sans", sans-serif; fill: #222; }
input, select, button { font: inherit; color: inherit; margin: 0; padding: 0; border: 0; border-radius: 0; min-width: 0; }
select { appearance: none; background: #e1e1e1 url("data:image/svg+xml,%3Csvg xmlns='http://www.w3.org/2000/svg' viewBox='0 0 8 8'%3E%3Cpath d='M1 2l3 3 3-3' fill='none' stroke='%23444'/%3E%3C/svg%3E") no-repeat right 2px center / 8px 8px; border: 1px solid #b5b5b5; padding: 0 12px 0 2px; }
.bare { background: none; display: flex; align-items: center; justify-content: center; }
.i6 { width: 6px; height: 6px; }
.i8 { width: 8px; height: 8px; }
.i10 { width: 10px; height: 11px; }
.i12 { width: 13px; height: 8px; }
.i15 { width: 15px; height: 16px; }

/* page frame */
.page { position: relative; z-index: 0; margin: 52px 54px 112px 97px; padding: 0 18px 0 23px; border: 6px solid #4f81bd; box-shadow: inset 0 0 0 2px #fff, inset 0 0 0 4px #4f81bd; display: flow-root; }
.watermark { position: absolute; z-index: -1; left: -6px; top: 200px; width: 1090px; height: 1200px; overflow: visible; }
.watermark text { font: 363px "Liberation Serif", serif; fill: #dcdcdc; }
.head { display: flex; justify-content: space-between; align-items: baseline; padding: 21px 5px 0 2px; height: 67px; border-bottom: 11px solid #c0504d; }
.head strong { font-size: 22px; color: #002060; }
.head em { font-size: 26px; line-height: 30px; }

/* running text */
.item { display: flex; margin: 0 0 0 36px; font-size: 25px; line-height: 33px; font-weight: 400; }
h2.item { font-weight: 700; }
.item u { text-decoration-thickness: 2px; text-underline-offset: 2px; }
.mark { flex: none; width: 35px; }
p .mark { font-family: "DejaVu Sans", sans-serif; font-size: 24px; }

/* figures */
.shot { border: 6px solid #000; box-shadow: 4px 5px 6px rgba(0,0,0,.5); overflow: hidden; background: #f0f0f0; font: 7px/9px "Open Sans", sans-serif; color: #111; }
.props { width: 100%; max-width: 562px; margin: 18px 0 11px 266px; height: 488px; }
.qgis { width: 100%; max-width: 847px; margin: 7px 0 11px 124px; }
.shape { width: 100%; max-width: 722px; margin: 5px 0 21px 168px; height: 278px; font: 9px/12px "DejaVu Sans", sans-serif; color: #333; }

/* layer properties dialog */
.props { border-width: 6px 7px 7px 6px; display: flex; flex-direction: column; }
.props-title { display: flex; align-items: center; gap: 4px; height: 22px; padding: 0 6px; background: #fff; border: 1px solid #1b6fb3; border-bottom: 0; }
.props-title span { flex: 1; }
.props-body { flex: 1; min-height: 0; display: flex; border: 1px solid #1b6fb3; border-width: 0 1px; }
.side { width: 100px; display: flex; flex-direction: column; background: #5c5c5c; }
.side-search { display: flex; align-items: center; height: 13px; padding-left: 6px; background: #fff; border: 1px solid #bbb; }
.side-search input { flex: 1; background: none; }
.side-main { flex: 1; min-height: 0; display: flex; padding-top: 4px; }
.side-list { flex: 1; height: 453px; display: grid; grid-auto-rows: 1fr; color: #fff; }
.side-list li { display: flex; align-items: center; gap: 6px; padding-left: 4px; white-space: nowrap; }
.side-list .on { background: #f2f2f2; color: #222; }
.vbar { width: 11px; display: flex; flex-direction: column; align-items: center; justify-content: space-between; gap: 2px; padding: 2px 0; background: #f0f0f0; }
.thumb { width: 9px; height: 80px; background: #cdcdcd; margin-bottom: auto; }
.thumb.tall { height: 372px; }
.pane { flex: 1; min-width: 0; padding: 2px 2px 1px 3px; display: flex; flex-direction: column; }
.combo { display: flex; align-items: center; height: 15px; background: #e1e1e1; border: 1px solid #c0c0c0; padding-left: 4px; }
.combo select { flex: 1; border: 0; height: 13px; }
.tree-row { display: flex; margin-top: 3px; height: 91px; }
.tree { width: 219px; background: #fff; border: 1px solid #aaa; border-bottom-color: #7d8790; }
.tree li { display: flex; align-items: center; height: 14px; padding-left: 2px; gap: 4px; }
.picked { flex: 1; display: flex; align-items: center; height: 14px; background: #d9d9d9; gap: 5px; }
.tree .child { padding-left: 29px; }
.chip { width: 10px; height: 10px; background: #ccc; }
.chip.c1 { background: #ced3d6; }
.preview { flex: 1; display: grid; place-items: center; padding: 0 0 0 4px; }
.preview i { width: 40px; height: 40px; background: #e7e7e7; }
.mini-buttons { display: flex; gap: 5px; margin-top: 4px; }
.mini-buttons button { width: 18px; height: 15px; display: grid; place-items: center; background: #e6e6e6; border: 1px solid #adadad; }
.mini-buttons .off { background: #cecece; border-color: #c0c0c0; }
.faint { opacity: .2; }
hr { width: 100%; margin: 4px 0; border: 0; border-top: 1px solid #c4c4c4; border-bottom: 1px solid #fff; }
.prop-grid { display: grid; grid-template-columns: 25px 1fr; align-items: center; row-gap: 1px; }
.prop-grid > select { height: 14px; }
.opacity { display: flex; align-items: center; gap: 2px; height: 13px; }
.opacity > input { flex: 1; height: 13px; appearance: none; background: linear-gradient(#d0d0d0, #d0d0d0) no-repeat center / 100% 2px; }
.opacity > input::-webkit-slider-thumb { appearance: none; width: 6px; height: 13px; background: #0078d7; }
.spin { display: flex; align-items: center; gap: 4px; width: 66px; height: 12px; background: #fff; border: 1px solid #888; padding-left: 2px; }
.spin input { flex: 1; width: 20px; height: 10px; background: none; }
.updown { flex: none; width: 9px; height: 10px; border: 1px solid #ccc; background: #eee url("data:image/svg+xml,%3Csvg xmlns='http://www.w3.org/2000/svg' viewBox='0 0 8 8'%3E%3Cpath d='M2 3l2-2 2 2zM2 5l2 2 2-2z' fill='%23333'/%3E%3C/svg%3E") center / 8px 8px no-repeat; }
.color { display: flex; align-items: center; gap: 3px; height: 14px; padding: 1px 2px; border: 1px solid #b5b5b5; background: #e8e8e8; }
.color span { flex: 1; height: 10px; background: repeating-conic-gradient(#b4b4b4 0 25%, #cfcfcf 0 50%) 0 0 / 6px 6px; }
hr.second { margin: 43px 0 5px; }
.fav-row { display: flex; align-items: center; gap: 6px; height: 13px; padding-right: 3px; }
.fav { flex: 1; display: flex; align-items: center; gap: 5px; height: 13px; padding: 0 3px 0 7px; border: 1px solid #999; background: #fff; }
.fav input { flex: 1; height: 11px; background: none; }
.symbols { display: flex; height: 149px; margin-top: 2px; border: 1px solid #999; background: #fff; overflow: hidden; }
.symbols ul { flex: 1; display: grid; grid-template-columns: repeat(6, 67px); grid-auto-rows: 80px; padding: 14px 0 0 2px; }
.symbols li { display: flex; flex-direction: column; align-items: center; text-align: center; line-height: 10px; white-space: nowrap; }
.symbols .vbar { height: 147px; }
.sw, .sw-svg { width: 42px; height: 37px; margin-bottom: 10px; flex: none; }
.sw { border: 1px solid #111; }
.plasma { background: linear-gradient(135deg, #1c0a93 0, #7d03a8 25%, #cc4778 50%, #f89540 78%, #f7e225); }
.gray { background: #969696; border: 0; }
.hash { background: repeating-linear-gradient(135deg, #111 0 1px, #fff 1px 5px); }
.hash.back { background: repeating-linear-gradient(45deg, #111 0 1px, #fff 1px 5px); }
.hash.cross { background: repeating-linear-gradient(45deg, #111 0 1px, #0000 1px 5px), repeating-linear-gradient(135deg, #111 0 1px, #fff 1px 5px); }
.oblue { border: 2px solid #377eb8; }
.ogreen { border: 2px solid #4daf4a; }
.ored { border: 2px solid #d32027; }
.dots { background: radial-gradient(circle, #111 1px, #0000 1px) 0 0 / 6px 6px; }
.bfill { background: #377eb8; border: 0; }
.view-row, .ok-row { display: flex; align-items: center; gap: 5px; }
.view-row { margin-top: 4px; }
.view { width: 15px; height: 14px; margin-right: -3px; }
.view.on { background: #a9cdf0; }
.btn { width: 49px; height: 15px; background: #e1e1e1; border: 1px solid #adadad; white-space: nowrap; }
.btn.ok { border: 1px solid #0078d7; }
.far { margin-left: 8px; }
.render-row { display: flex; align-items: center; gap: 5px; height: 20px; padding-left: 4px; font-weight: 700; color: #333; }
.play { border: 4px solid transparent; border-left: 5px solid #111; border-right: 0; }

/* main QGIS window */
.q-title { display: flex; align-items: center; gap: 1px; height: 14px; padding-left: 1px; background: linear-gradient(#b9cadb, #d2dfec); overflow: hidden; }
.q-title span { padding-left: 4px; }
.q-title button { flex: none; width: 18px; height: 11px; display: grid; place-items: center; background: #c9d8e8; border: 1px solid #8c9fb4; margin-left: 1px; }
.q-title button:last-child { margin-right: -4px; }
.min { width: 6px; height: 3px; border: 1px solid #555; background: #fff; }
.q-menu { display: flex; gap: 10px; height: 12px; align-items: center; padding-left: 4px; background: linear-gradient(#fff, #d9dcf0); color: #999; }
.bar { display: flex; align-items: center; height: 21px; border-top: 1px solid #bbb; background: #f1f1f1; overflow: hidden; }
.bar svg { width: 19px; height: 16px; padding: 1px 2px; }
.bar svg.down { height: 19px; padding: 2px; border: 1px solid #888; border-radius: 2px; background: #ddd; }
.grip { flex: none; width: 8px; height: 16px; border-left: 1px solid #bbb; background: linear-gradient(90deg, #0000 2px, #aaa 2px 3px, #0000 3px); }
.grip.first { width: 5px; border: 0; }
.more { flex: none; width: 5px; height: 3px; margin: 0 1px; background: #111; clip-path: polygon(0 0, 100% 0, 50% 100%); }
.q-body { display: flex; border-top: 1px solid #999; height: 362px; }
.docks { width: 181px; flex: none; display: flex; flex-direction: column; border-right: 1px solid #aaa; }
.docks h4 { display: flex; align-items: center; gap: 5px; margin: 0; height: 12px; padding: 0 4px 0 2px; font-weight: 400; background: #dcdcdc; }
.dock-tools { display: flex; align-items: center; gap: 4px; height: 17px; padding-left: 2px; }
.dock-tools svg { width: 10px; height: 11px; }
.dock-tools.wide svg { width: 11px; }
.browser { display: flex; height: 168px; border: 1px solid #999; border-width: 1px 0; background: #fff; overflow: hidden; }
.browser ul { flex: 1; height: 172px; display: grid; grid-auto-rows: 1fr; }
.browser li { display: flex; align-items: center; gap: 4px; padding-left: 5px; }
.browser li svg { width: 10px; height: 10px; }
.browser li i { width: 5px; }
.browser .exp { height: 5px; background: #aaa; clip-path: polygon(0 0, 80% 50%, 0 100%); }
.vbar.q { width: 10px; height: 166px; padding: 3px 0; background: #f2f2f2; }
.q .thumb { border: 1px solid #999; background: linear-gradient(90deg, #f5f5f5, #ccc); height: 89px; }
.flip { transform: rotate(180deg); }
.layers { margin-top: 3px; flex: 1; display: flex; flex-direction: column; }
.layer-list { flex: 1; display: grid; grid-template-rows: repeat(9, 1fr); padding-bottom: 21px; border-top: 1px solid #999; background: #fff; color: #aaa; }
.layer-list li { margin-left: 14px; display: flex; align-items: center; }
.layer-list label { display: flex; align-items: center; gap: 4px; }
.layer-list svg { width: 10px; height: 9px; }
input[type=checkbox] { appearance: none; flex: none; width: 8px; height: 8px; border: 1px solid #aaa; background: #f5f5f5; }
input[type=checkbox]:checked { background: #e4eaf5 url("data:image/svg+xml,%3Csvg xmlns='http://www.w3.org/2000/svg' viewBox='0 0 8 8'%3E%3Cpath d='M1 4l2 3 4-6' fill='none' stroke='%23349' stroke-width='1.500'/%3E%3C/svg%3E"); }
.lines { width: 10px; height: 8px; border: 1px solid #667; border-width: 1px 0; }
.lines.small { height: 4px; border-color: #aaa; }
.sq { width: 10px; height: 10px; background: #e8e8e8; }
.sq.y { background: #ff3; }
.sq.g { background: linear-gradient(120deg, #0000 45%, #c9d36a 45% 58%, #0000 58%), #66b58f; }
.layer-list .cur, .layer-list .live { color: #111; font-weight: 700; }
.layer-list .cur { background: linear-gradient(#f6f6f6, #e2e2e2); }
.map { flex: 1; min-width: 0; height: 358px; margin: 2px 0 0 3px; background: #e9e9e9; border-left: 1px solid #aaa; }
.map-text { font: 6px "DejaVu Sans", sans-serif; text-anchor: middle; fill: #222; }
.status { display: flex; align-items: center; gap: 6px; height: 18px; padding-left: 3px; border-top: 1px solid #999; background: #f0f0f0; font-size: 6px; white-space: nowrap; overflow: hidden; }
.status > svg:last-child { margin-right: -3px; }
.status input[type=text], .status select { height: 12px; background-color: #fff; border: 0; }
.locate { display: flex; align-items: center; gap: 4px; width: 122px; padding-left: 4px; border: 1px solid #ddd; background: #fff; }
.locate input { flex: 1; }
.w40 { width: 38px; padding-left: 4px; }
.status .w46 { width: 46px; background: #fff url("data:image/svg+xml,%3Csvg xmlns='http://www.w3.org/2000/svg' viewBox='0 0 8 8'%3E%3Cpath d='M0 2h8L4 6z' fill='%23111'/%3E%3C/svg%3E") right 3px center / 5px 5px no-repeat; }
.spin2 { display: flex; align-items: center; width: 47px; background: #fff; border: 1px solid #ddd; }
.spin2 input { flex: 1; padding-left: 2px; }
.render { display: flex; align-items: center; gap: 2px; }
.task { display: flex; gap: 3px; height: 6px; padding-left: 8px; overflow: hidden; background: linear-gradient(90deg, #6d87a5, #a5c0dd 25%, #9fbbda 72%, #5e7388 76%, #7f94ab); }
.task i { flex: none; width: 35px; height: 12px; }
.task .orb { width: 18px; border-radius: 9px; background: #55697f; margin-right: 20px; }
.task .ie { width: 16px; border-radius: 8px; background: #5aa3c9; margin-right: 18px; }
.task .folder { width: 18px; background: #b6d1a0; margin-right: 18px; }
.task .tile { border: 1px solid #6b819b; background: #c8d9ea; }
.task .y { background: radial-gradient(circle, #d8b44b 5px, #c8d9ea 6px); }
.task .g { background: radial-gradient(circle, #73a82e 6px, #c8d9ea 7px); }
.task .r { background: radial-gradient(circle, #d33 6px, #c8d9ea 7px); }
.task .sq { background: linear-gradient(90deg, #c8d9ea 25%, #c00 25% 75%, #c8d9ea 75%); }

/* new shapefile dialog */
.s-title { display: flex; align-items: center; gap: 5px; height: 18px; padding: 0 9px 4px 6px; background: #fff; font-size: 10px; }
.s-title svg { height: 11px; }
.s-title span { flex: 1; }
.s-form { padding: 7px 11px 0 8px; }
.s-form input[type=text], .s-form select { height: 14px; }
.s-form select { background-position: right 7px center; }
.s-form input[type=text] { border: 1px solid #8a8a8a; background: #fff; padding-left: 2px; }
.s-top { display: grid; grid-template-columns: 233px 1fr; row-gap: 4px; align-items: center; }
.s-top > label { line-height: 14px; }
.pair { display: flex; gap: 6px; }
.clearable { flex: 1; display: flex; align-items: center; border: 1px solid #8a8a8a; background: #fff; padding-right: 8px; height: 14px; }
.s-form .clearable input { flex: 1; border: 0; height: 12px; background: none; }
.small-btn { width: 21px; height: 14px; display: grid; place-items: center; background: #e1e1e1; border: 1px solid #c0c0c0; line-height: 8px; }
.small-btn svg { height: 11px; }
.hot { position: relative; display: flex; align-items: center; background: #e1e1e1; border: 1px solid #b5b5b5; height: 14px; padding-left: 4px; }
.hot::after { content: ""; position: absolute; inset: -6px -9px -7px -14px; border: 5px solid #fb812c; border-width: 4px 5px; pointer-events: none; }
.hot select { flex: 1; height: 12px; border: 0; }
.vee { width: 15px; height: 9px; }
.checks { grid-column: 2; display: grid; grid-template-columns: 231px 1fr; height: 12px; }
.checks label { display: flex; align-items: center; gap: 4px; }
.checks input { width: 13px; height: 10px; border-color: #555; background: #fff; }
.proj { grid-column: 2; }
.proj select { flex: 1; }
fieldset { margin: 3px 0 0 1px; padding: 6px 10px 8px; border: 1px solid #dcdcdc; min-width: 0; }
fieldset + fieldset { margin-top: 2px; }
legend { padding: 0 3px; margin-left: -5px; font-weight: 700; line-height: 12px; font-size: 9px; }
.field-grid { display: grid; grid-template-columns: 38px 128px 52px 1fr; row-gap: 4px; align-items: center; }
.span { grid-column: span 3; }
.s-form input.focus { border-color: #5fa8dc; }
.typed { display: flex; align-items: center; background: #e1e1e1; border: 1px solid #b5b5b5; height: 14px; padding-left: 4px; }
.typed b { font-size: 8px; color: #666; }
.typed select { flex: 1; height: 12px; border: 0; }
.prec { padding-left: 5px; }
.s-form input:disabled { background: #f0f0f0; border-color: #d5d5d5; }
.add { grid-column: 4; height: 14px; display: flex; align-items: center; gap: 4px; padding-left: 5px; background: #e1e1e1; border: 1px solid #b0b0b0; }
.add svg { height: 12px; }
.table-box { height: 60px; border: 1px solid #8a8f96; background: #fff; }
table { width: 387px; border-collapse: collapse; table-layout: fixed; }
th, td { width: 97px; padding: 2px 0 0 4px; font-weight: 400; text-align: left; line-height: 12px; }
th + th { border-left: 1px solid #e5e5e5; }

/* page footer */
.foot { display: flex; gap: 5px; margin: 21px 14px 0 10px; }
.foot-main { flex: 1; min-width: 0; display: flex; align-items: baseline; gap: 73px; margin-top: 9px; padding: 13px 0 0 5px; border-top: 11px solid #7030a0; height: 65px; font-size: 20px; white-space: nowrap; }
.foot-main .college { font-size: 25px; line-height: 36px; }
.foot-num { width: 57px; height: 54px; border-top: 3px solid #9bbb59; border-bottom: 11px solid #9bbb59; font: 28px/50px Lato, sans-serif; padding-left: 1px; }
```
